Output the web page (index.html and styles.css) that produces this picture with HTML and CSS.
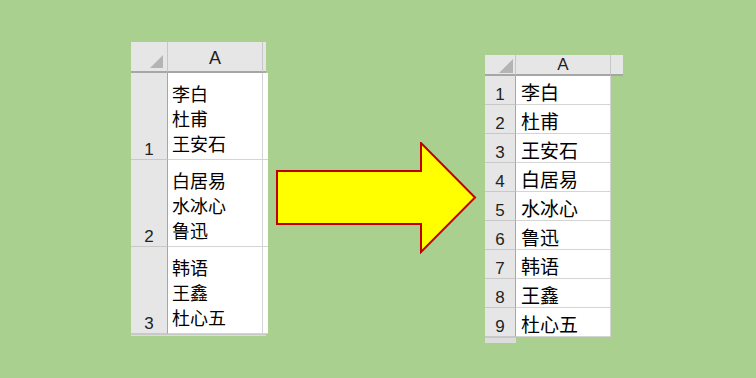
FILE: index.html
```html
<!DOCTYPE html>
<html lang="zh">
<head>
<meta charset="utf-8">
<title>分列示意</title>
<link rel="stylesheet" href="styles.css">
</head>
<body>
<div class="stage">
  <div class="sheet sheet-before">
    <div class="corner"><span class="tri"></span></div>
    <div class="colhead">A</div>
    <div class="colhead part"></div>

    <div class="rowhead">1</div>
    <div class="cell multi"><span>李白</span><span>杜甫</span><span>王安石</span></div>
    <div class="cell part"></div>

    <div class="rowhead">2</div>
    <div class="cell multi"><span>白居易</span><span>水冰心</span><span>鲁迅</span></div>
    <div class="cell part"></div>

    <div class="rowhead">3</div>
    <div class="cell multi"><span>韩语</span><span>王鑫</span><span>杜心五</span></div>
    <div class="cell part"></div>

    <div class="tail"></div>
    <div class="tail"></div>
    <div class="tail"></div>
  </div>

  <svg class="arrow" width="202" height="112" viewBox="0 0 202 112">
    <polygon points="2,29 146,29 146,1 200,55.5 146,110 146,82 2,82" fill="#ffff00" stroke="#c00000" stroke-width="2" stroke-linejoin="miter"/>
  </svg>

  <div class="sheet sheet-after">
    <div class="corner"><span class="tri"></span></div>
    <div class="colhead">A</div>
    <div class="colhead part"></div>

    <div class="rowhead">1</div><div class="cell">李白</div><div class="gap"></div>
    <div class="rowhead">2</div><div class="cell">杜甫</div><div class="gap"></div>
    <div class="rowhead">3</div><div class="cell">王安石</div><div class="gap"></div>
    <div class="rowhead">4</div><div class="cell">白居易</div><div class="gap"></div>
    <div class="rowhead">5</div><div class="cell">水冰心</div><div class="gap"></div>
    <div class="rowhead">6</div><div class="cell">鲁迅</div><div class="gap"></div>
    <div class="rowhead">7</div><div class="cell">韩语</div><div class="gap"></div>
    <div class="rowhead">8</div><div class="cell">王鑫</div><div class="gap"></div>
    <div class="rowhead">9</div><div class="cell">杜心五</div><div class="gap"></div>
    <div class="tail"></div><div class="gap"></div><div class="gap"></div>
  </div>
</div>
</body>
</html>
```

FILE: styles.css
```css
* { box-sizing: border-box; }

html, body {
  margin: 0;
  padding: 0;
}

body {
  width: 756px;
  height: 378px;
  overflow: hidden;
  background: #a9d08e;
  font-family: "Noto Sans CJK SC", "Noto Sans", sans-serif;
  color: #000;
}

.stage {
  display: flex;
  align-items: flex-start;
}

.sheet {
  display: grid;
}

.sheet-before {
  margin: 42px 0 0 131px;
  grid-template-columns: 37px 95px 3px;
  grid-template-rows: 31px repeat(3, 87px) 2px;
}

.sheet-after {
  margin: 55px 0 0 8px;
  grid-template-columns: 31px 95px 12px;
  grid-template-rows: 21px repeat(9, 29px) 6px;
}

.arrow {
  display: block;
  margin: 142px 0 0 9px;
}

.corner,
.colhead {
  background: #e6e6e6;
  border-bottom: 2px solid #a6a6a6;
  border-right: 1px solid #c6c6c6;
}

.corner {
  display: flex;
  justify-content: flex-end;
  align-items: flex-end;
  padding: 0 4px 3px 0;
}

.tri {
  display: block;
  width: 13px;
  height: 13px;
  background: #b4b4b4;
  clip-path: polygon(100% 0, 100% 100%, 0 100%);
}

.sheet-after .corner {
  padding: 0 2px 1px 0;
}

.sheet-after .tri {
  width: 14px;
  height: 14px;
}

.colhead {
  display: flex;
  justify-content: center;
  align-items: flex-end;
  font-family: "Liberation Sans", Arial, sans-serif;
  font-size: 18px;
  line-height: 20px;
  color: #222;
  padding-bottom: 3px;
}

.sheet-after .colhead {
  font-size: 17px;
  line-height: 18px;
  padding-bottom: 0;
}

.colhead.part {
  border-right: 0;
}

.rowhead {
  background: #e6e6e6;
  border-right: 1px solid #a6a6a6;
  border-bottom: 1px solid #c8c8c8;
  display: flex;
  justify-content: center;
  align-items: flex-end;
  font-family: "Liberation Sans", Arial, sans-serif;
  font-size: 17px;
  line-height: 18px;
  color: #222;
  padding-bottom: 0;
}

.cell {
  background: #fff;
  border-right: 1px solid #d4d4d4;
  border-bottom: 1px solid #d4d4d4;
  display: flex;
  align-items: flex-end;
  padding: 0 0 0 5px;
  font-size: 19px;
  line-height: 24px;
}

.cell.multi {
  flex-direction: column;
  justify-content: flex-end;
  align-items: flex-start;
  padding: 0 0 3px 4px;
  font-size: 18px;
  line-height: 25px;
}

.cell.part {
  border-right: 0;
}

.tail {
  background: #dcdcdc;
  border-top: 1px solid #c8c8c8;
}

.gap {
  background: transparent;
}
```
